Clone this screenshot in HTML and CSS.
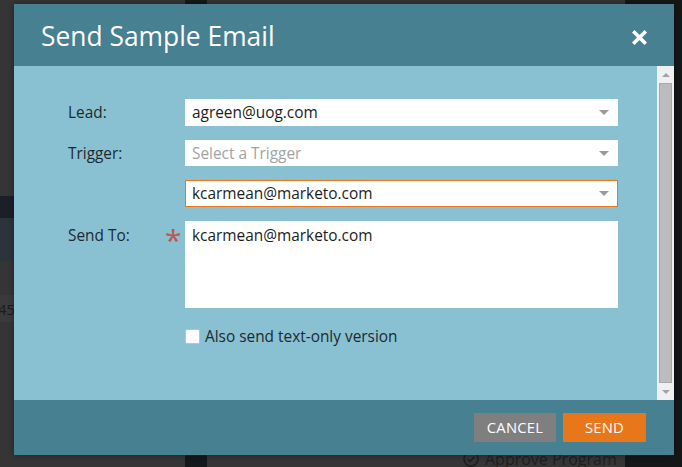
FILE: index.html
```html
<!DOCTYPE html>
<html lang="en">
<head>
<meta charset="utf-8">
<title>Send Sample Email</title>
<link rel="stylesheet" href="styles.css">
</head>
<body>
<div class="page">
  <div class="col-left">
    <div class="blk blk-a"></div>
    <div class="blk blk-b"></div>
    <div class="blk blk-c"><span class="num">45</span></div>
  </div>
  <div class="col-dark"></div>
  <div class="col-mid">
    <div class="approve">
      <svg class="approve-ic" width="16" height="16" viewBox="0 0 16 16"><circle cx="8" cy="8" r="7" fill="none" stroke="#1e1e1e" stroke-width="1.6"/><path d="M4.5 8.2l2.4 2.4 4.6-4.8" fill="none" stroke="#1e1e1e" stroke-width="1.6"/></svg>
      <span>Approve Program</span>
    </div>
  </div>
  <div class="col-right"></div>
</div>

<div class="modal">
  <div class="modal-head">
    <h1 class="modal-title">Send Sample Email</h1>
    <button class="close" aria-label="Close">
      <svg width="15" height="15" viewBox="0 0 15 15"><path d="M2.5 2.5L12.5 12.5M12.5 2.5L2.5 12.5" stroke="#fff" stroke-width="3.6" stroke-linecap="square"/></svg>
    </button>
  </div>
  <div class="modal-body">
    <div class="content">
      <div class="form">
        <label class="lbl">Lead:</label>
        <span></span>
        <div class="select"><span class="val">agreen@uog.com</span><i class="caret"></i></div>

        <label class="lbl">Trigger:</label>
        <span></span>
        <div class="select short"><span class="val ph">Select a Trigger</span><i class="caret"></i></div>

        <span></span>
        <span></span>
        <div class="select focus"><span class="val">kcarmean@marketo.com</span><i class="caret"></i></div>

        <label class="lbl lbl-top">Send To:</label>
        <span class="req">*</span>
        <div class="textarea">kcarmean@marketo.com</div>

        <span></span>
        <span></span>
        <label class="check"><span class="box"></span><span>Also send text-only version</span></label>
      </div>
    </div>
    <div class="scrollbar">
      <div class="sb-btn"><i class="tri-up"></i></div>
      <div class="sb-thumb"></div>
      <div class="sb-btn"><i class="tri-down"></i></div>
    </div>
  </div>
  <div class="modal-foot">
    <button class="btn btn-cancel">CANCEL</button>
    <button class="btn btn-send">SEND</button>
  </div>
</div>
</body>
</html>
```

FILE: styles.css
```css
* { box-sizing: border-box; }
html, body { margin: 0; padding: 0; }
body {
  width: 682px;
  height: 467px;
  overflow: hidden;
  background: #353535;
  font-family: "Open Sans", "DejaVu Sans", sans-serif;
  position: relative;
}

/* background page */
.page {
  display: flex;
  height: 467px;
}
.col-left {
  width: 185px;
  display: flex;
  flex-direction: column;
  padding-top: 196px;
}
.blk-a { height: 22px; background: #1c1f27; }
.blk-b { height: 43px; background: #2c333b; }
.blk-c {
  height: 27px;
  margin-top: 34px;
  background: #3a3a3a;
  display: flex;
  align-items: center;
}
.num {
  font-size: 15px;
  color: #1c1c1c;
  margin-left: -2px;
}
.col-dark { width: 22px; background: #15181b; }
.col-mid {
  flex: 1;
  display: flex;
  flex-direction: column;
  justify-content: flex-end;
  align-items: flex-start;
  padding-left: 256px;
}
.approve {
  display: flex;
  align-items: center;
  gap: 6px;
  font-size: 16px;
  color: #1e1e1e;
  margin-bottom: -3px;
  white-space: nowrap;
}
.col-right { width: 57px; background: #141618; }

/* modal */
.modal {
  position: absolute;
  left: 14px;
  top: 4px;
  width: 660px;
  height: 451px;
  display: flex;
  flex-direction: column;
  box-shadow: 0 0 6px rgba(0,0,0,0.35);
}
.modal-head {
  height: 62px;
  background: #468091;
  display: flex;
  align-items: center;
  justify-content: space-between;
  padding: 0 27px 0 27px;
}
.modal-title {
  margin: 0;
  font-size: 26.4px;
  font-weight: 400;
  color: #fff;
  padding-top: 1px;
}
.close {
  background: none;
  border: 0;
  padding: 0;
  width: 15px;
  height: 15px;
  display: block;
  margin-top: 4px;
}
.close svg { display: block; }

.modal-body {
  flex: 1;
  display: flex;
  background: #89c1d3;
}
.content {
  flex: 1;
  padding: 33px 0 0 54px;
}
.form {
  display: grid;
  grid-template-columns: 98px 19px 433px;
  row-gap: 14px;
  align-items: center;
}
.lbl {
  font-size: 15.4px;
  color: #1c2a2f;
}
.lbl-top { align-self: start; padding-top: 4px; }
.req {
  align-self: start;
  color: #c0544f;
  font-size: 30px;
  line-height: 30px;
  margin-top: 4px;
  margin-left: -1px;
}
.select {
  height: 27px;
  background: #fff;
  display: flex;
  align-items: center;
  justify-content: space-between;
  padding: 0 9px 0 7px;
  font-size: 15.4px;
  color: #1d1d1d;
}
.select.short { height: 26px; }
.select.focus { border: 1px solid #e8761b; padding-left: 6px; padding-right: 8px; }
.ph { color: #a3a3a3; }
.caret {
  width: 0;
  height: 0;
  border-left: 5px solid transparent;
  border-right: 5px solid transparent;
  border-top: 5px solid #9a9a9a;
}
.textarea {
  height: 87px;
  background: #fff;
  font-size: 15.4px;
  color: #1d1d1d;
  padding: 4px 7px;
  line-height: 22px;
}
.check {
  display: flex;
  align-items: center;
  gap: 5px;
  margin-top: 4px;
  font-size: 15.4px;
  color: #1c2a2f;
}
.box {
  width: 15px;
  height: 15px;
  background: #fff;
  border: 1px solid #b8c4c8;
  border-radius: 2px;
}

.scrollbar {
  width: 17px;
  background: #f0f0f0;
  display: flex;
  flex-direction: column;
  padding: 0 2px;
}
.sb-btn {
  height: 17px;
  display: flex;
  align-items: center;
  justify-content: center;
}
.sb-thumb {
  flex: 1;
  background: #bcbcbc;
  border: 1px solid #a9a9a9;
}
.tri-up, .tri-down {
  width: 0;
  height: 0;
  border-left: 4px solid transparent;
  border-right: 4px solid transparent;
}
.tri-up { border-bottom: 4px solid #a3a3a3; }
.tri-down { border-top: 4px solid #a3a3a3; }

.modal-foot {
  height: 55px;
  background: #468091;
  display: flex;
  align-items: center;
  justify-content: flex-end;
  gap: 7px;
  padding-right: 28px;
}
.btn {
  height: 29px;
  border: 0;
  color: #fff;
  font-family: "Open Sans", "DejaVu Sans", sans-serif;
  font-size: 14.8px;
  padding: 0 0 2px 0;
  letter-spacing: 0.2px;
}
.btn-cancel { width: 82px; background: #7f7f7f; }
.btn-send { width: 83px; background: #e8761b; }
```
